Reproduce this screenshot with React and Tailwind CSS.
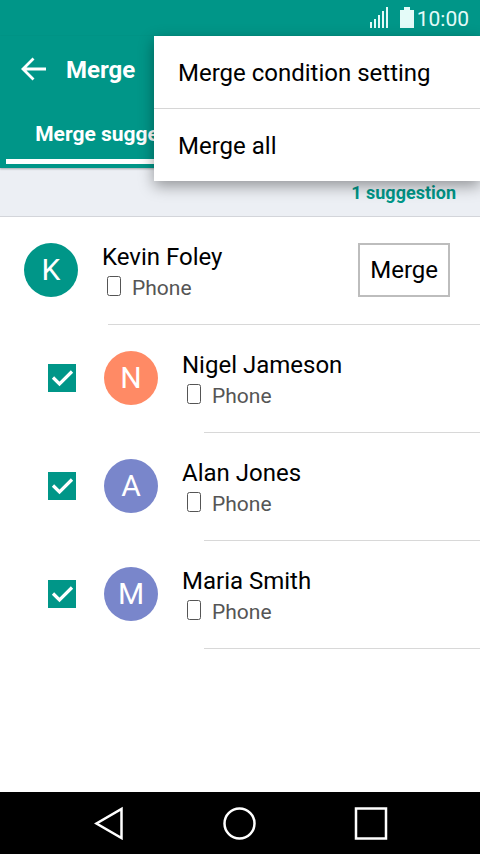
import { useState } from 'react';

const SUGGESTIONS = [
  { name: 'Nigel Jameson', tone: 'bg-[#ff8a65]' },
  { name: 'Alan Jones', tone: 'bg-[#7986cb]' },
  { name: 'Maria Smith', tone: 'bg-[#7986cb]' },
];

const MENU_ITEMS = ['Merge condition setting', 'Merge all'];

function StatusBar() {
  return (
    <div className="flex h-9 items-center justify-end bg-[#009688] pr-[11px] text-[#e4fbf8]">
      <svg className="mb-[2px]" width="18" height="21" viewBox="0 0 18 21" fill="currentColor" shapeRendering="crispEdges" aria-hidden="true">
        <path d="M0 15h2v6H0zM4 12h2v9H4zM8 8h2v13H8zM12 4h2v17h-2zM16 0h2v21h-2z" />
      </svg>
      <svg className="mb-[2px] ml-3" width="14" height="21" viewBox="0 0 14 21" fill="currentColor" shapeRendering="crispEdges" aria-hidden="true">
        <path d="M4 0h6v3h4v18H0V3h4z" />
      </svg>
      <span className="ml-[3px] pt-px text-[21px] leading-9">10:00</span>
    </div>
  );
}

function Avatar({ name, tone }) {
  return (
    <div className={`flex size-[54px] shrink-0 items-center justify-center rounded-full text-[30px] leading-none text-white ${tone}`} aria-hidden="true">
      {name[0]}
    </div>
  );
}

function ContactText({ name }) {
  return (
    <div className="ml-6 min-w-0 flex-1 pt-1">
      <p className="truncate text-2xl leading-8 text-black">{name}</p>
      <p className="flex items-center pl-[5px] text-[21px] leading-[30px] text-[#555]">
        <svg className="mb-1 shrink-0" width="14" height="20" viewBox="0 0 14 20" fill="none" stroke="#555" aria-hidden="true">
          <rect x="0.5" y="0.5" width="13" height="19" rx="2" />
        </svg>
        <span className="ml-[11px]">Phone</span>
      </p>
    </div>
  );
}

function SuggestionRow({ name, tone }) {
  const [checked, setChecked] = useState(true);

  return (
    <li>
      <label className="flex min-h-[107px] items-center pb-[2px] pl-12">
        <span className="relative size-7 shrink-0">
          <input
            type="checkbox"
            checked={checked}
            onChange={(event) => setChecked(event.target.checked)}
            className="block size-7 appearance-none border-2 border-[#009688] checked:bg-[#009688]"
            aria-label={name}
          />
          {checked ? (
            <svg className="pointer-events-none absolute inset-0" width="28" height="28" viewBox="0 0 28 28" fill="none" stroke="white" strokeWidth="3.2" aria-hidden="true">
              <path d="M5 13.5l6.5 6.5L24 7.5" />
            </svg>
          ) : null}
        </span>
        <span className="w-7 shrink-0" />
        <Avatar name={name} tone={tone} />
        <ContactText name={name} />
      </label>
      <div className="ml-[204px] h-px bg-[#d8d8d8]" />
    </li>
  );
}

function OverflowMenu() {
  return (
    <div role="menu" className="absolute right-0 top-9 w-[326px] divide-y divide-[#d6d6d6] bg-white shadow-[0_5px_14px_rgba(0,0,0,0.38)]">
      {MENU_ITEMS.map((item) => (
        <button key={item} type="button" role="menuitem" className="block h-[73px] w-full px-6 pt-[2px] text-left text-2xl text-black last:h-[72px]">
          {item}
        </button>
      ))}
    </div>
  );
}

function NavigationBar() {
  return (
    <nav className="flex h-[62px] items-center justify-center gap-[98px] bg-black text-white">
      <button type="button" aria-label="Back">
        <svg width="32" height="34" viewBox="0 0 32 34" fill="none" stroke="currentColor" strokeWidth="2.5" aria-hidden="true">
          <path d="M29.5 3v29L4.5 17.5z" />
        </svg>
      </button>
      <button type="button" aria-label="Home">
        <svg width="34" height="34" viewBox="0 0 34 34" fill="none" stroke="currentColor" strokeWidth="2.5" aria-hidden="true">
          <circle cx="17.5" cy="17.5" r="15" />
        </svg>
      </button>
      <button type="button" aria-label="Recent apps">
        <svg width="34" height="34" viewBox="0 0 34 34" fill="none" stroke="currentColor" strokeWidth="2.5" aria-hidden="true">
          <path d="M2 2.5h30v30H2z" />
        </svg>
      </button>
    </nav>
  );
}

export default function App() {
  return (
    <div className="relative flex min-h-screen flex-col bg-white font-[Roboto,sans-serif]">
      <StatusBar />

      <header className="relative bg-[#009688] text-white shadow-[0_1px_2px_rgba(0,0,0,0.3)]">
        <div className="flex h-[67px] items-center pl-5">
          <button type="button" className="pb-[2px]" aria-label="Back">
            <svg width="26" height="24" viewBox="0 0 26 24" fill="none" stroke="currentColor" strokeWidth="2.8" aria-hidden="true">
              <path d="M26 12H3M13.5 1.5L3 12l10.5 10.5" />
            </svg>
          </button>
          <h1 className="ml-5 text-2xl font-bold">Merge</h1>
        </div>
        <div className="flex px-[6px] pb-1" role="tablist">
          <button type="button" role="tab" aria-selected="true" className="h-[61px] w-[240px] border-b-[5px] border-white pt-2 text-[21px] font-bold">
            Merge suggestions
          </button>
        </div>
      </header>

      <main className="flex-1">
        <div className="flex h-[49px] items-center justify-end border-b border-[#d3d5da] bg-[#eceff4] pr-6 pt-[2px] text-lg font-bold text-[#009688]">
          1 suggestion
        </div>
        <div className="flex min-h-[107px] items-center pb-[2px] pl-6 pr-[30px]">
          <Avatar name="Kevin Foley" tone="bg-[#009688]" />
          <ContactText name="Kevin Foley" />
          <button type="button" className="h-[54px] border-2 border-[#bdbdbd] px-[10px] text-2xl text-black">Merge</button>
        </div>
        <div className="ml-[108px] h-px bg-[#d8d8d8]" />
        <ul>
          {SUGGESTIONS.map((person) => <SuggestionRow key={person.name} name={person.name} tone={person.tone} />)}
        </ul>
      </main>

      <NavigationBar />
      <OverflowMenu />
    </div>
  );
}
